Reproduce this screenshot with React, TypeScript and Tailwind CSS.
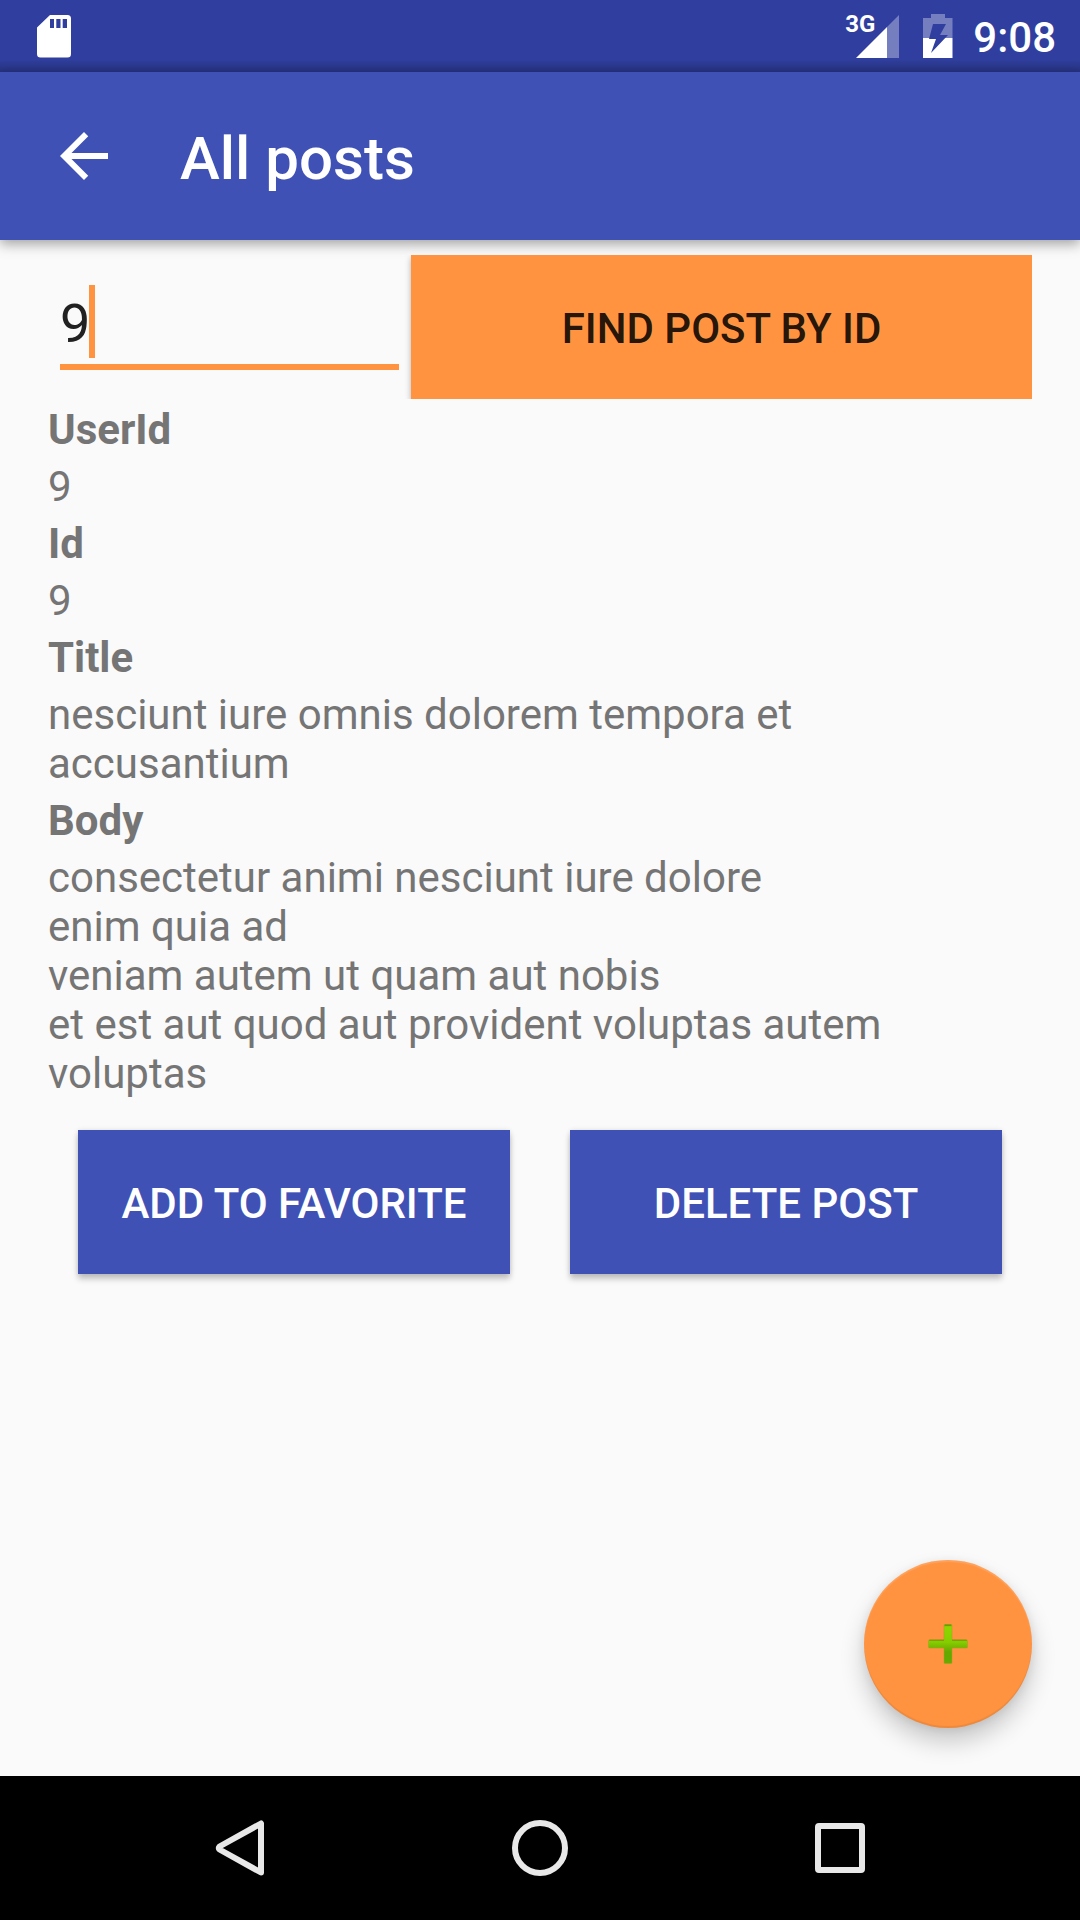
import React, { useState } from "react";

const actionButton =
  "flex h-36 flex-1 items-center justify-center bg-[#3f51b5] pt-0.5 text-[42px] font-medium text-white shadow-[0_5px_6px_rgba(0,0,0,0.22),0_0_5px_rgba(0,0,0,0.1)]";

const fields = [
  { label: "UserId", text: "9" },
  { label: "Id", text: "9" },
  { label: "Title", text: "nesciunt iure omnis dolorem tempora et accusantium" },
  {
    label: "Body",
    text: "consectetur animi nesciunt iure dolore\nenim quia ad\nveniam autem ut quam aut nobis\net est aut quod aut provident voluptas autem voluptas",
  },
];

function StatusBar() {
  return (
    <div className="flex h-[72px] items-center justify-between bg-[#303f9f] bg-linear-to-b from-transparent from-82% to-black/20 pr-6 pl-9">
      <svg width="36" height="44" viewBox="0 0 36 44" aria-label="SD card">
        <path
          fill="#fff"
          fillRule="evenodd"
          d="M14 1h17.500a3.500 3.500 0 0 1 3.500 3.500v35.500a3.500 3.500 0 0 1-3.500 3.500h-27a3.500 3.500 0 0 1-3.500-3.500V13.500ZM14 5v9h4V5Zm6.300 0v9h4.200V5Zm6.400 0v9H31V5Z"
        />
      </svg>
      <div className="flex items-center">
        <div className="relative h-11 w-[54px]">
          <span className="absolute -top-1 left-0 text-[24px] leading-[28px] font-bold text-white">3G</span>
          <svg className="absolute right-0 bottom-0" width="43" height="43" viewBox="0 0 43 43" aria-label="Signal">
            <path fill="#757fc0" d="M43 0v43H31V12Z" />
            <path fill="#fff" d="M31 12v31H0Z" />
          </svg>
        </div>
        <svg className="ml-6" width="30" height="44" viewBox="0 0 30 44" aria-label="Battery charging">
          <path fill="#757fc0" d="M8 0h14v4h7.500v20H0V4h8Z" />
          <path fill="#fff" d="M0 24h29.500v20H0Z" />
          <path fill="#303f9f" d="M10 10h13l-6 11h8L8 39l5-14H6Z" />
        </svg>
        <span className="ml-5 pt-0.5 text-[42px] leading-[49px] font-medium text-white">9:08</span>
      </div>
    </div>
  );
}

function AppBar() {
  return (
    <header className="relative flex h-[168px] items-center bg-[#3f51b5] pl-12 shadow-[0_4px_12px_rgba(0,0,0,0.36)]">
      <button type="button" aria-label="Back">
        <svg width="72" height="72" viewBox="0 0 24 24" fill="#fff">
          <path d="M20 11H7.830l5.590-5.590L12 4l-8 8 8 8 1.410-1.410L7.830 13H20v-2z" />
        </svg>
      </button>
      <h1 className="ml-[60px] pt-1.5 text-[60px] leading-[70px] font-medium text-white">All posts</h1>
    </header>
  );
}

function NavBar() {
  return (
    <nav className="flex h-36 items-center bg-black px-[90px]">
      <button type="button" aria-label="Back" className="flex flex-1 justify-center">
        <svg width="60" height="60" viewBox="0 0 60 60" fill="none" stroke="#e8e8e8" strokeWidth="6" strokeLinejoin="round">
          <path d="M51 5.500v49L9.500 31.500q-1.500-1.500 0-3Z" />
        </svg>
      </button>
      <button type="button" aria-label="Home" className="flex flex-1 justify-center">
        <svg width="60" height="60" viewBox="0 0 60 60" fill="none" stroke="#e8e8e8" strokeWidth="6">
          <circle cx="30" cy="30" r="25" />
        </svg>
      </button>
      <button type="button" aria-label="Overview" className="flex flex-1 justify-center">
        <svg width="60" height="60" viewBox="0 0 60 60" fill="none" stroke="#e8e8e8" strokeWidth="6">
          <rect x="8" y="8" width="44" height="44" rx="1" />
        </svg>
      </button>
    </nav>
  );
}

export default function App() {
  const [postId, setPostId] = useState("9");

  return (
    <div className="flex min-h-screen flex-col bg-[#fafafa] font-['Roboto',sans-serif]">
      <StatusBar />
      <AppBar />
      <main className="relative flex-1 px-12 pt-[15px]">
        <form
          className="grid grid-cols-[363fr_621fr] overflow-hidden"
          onSubmit={(e) => e.preventDefault()}
        >
          <div className="relative mx-3 mt-[30px] mb-[29px] border-b-[6px] border-[#ff9340]">
            <input
              aria-label="Post id"
              value={postId}
              onChange={(e) => setPostId(e.target.value)}
              className="block h-[73px] w-full bg-transparent pt-1 text-[54px] leading-[69px] text-[#212121] caret-transparent outline-none"
            />
            <span className="absolute top-0 left-[29px] h-[73px] w-1.5 bg-[#ff9340]" />
          </div>
          <button
            type="submit"
            className="flex h-36 items-center justify-center bg-[#ff9340] pt-0.5 text-[42px] font-medium text-black/87 shadow-[0_3px_6px_rgba(0,0,0,0.3)]"
          >
            FIND POST BY ID
          </button>
        </form>

        <dl className="text-[42px] leading-[49px] text-[#757575]">
          {fields.map((f) => (
            <React.Fragment key={f.label}>
              <dt className="pt-1.5 pb-0.5 font-bold">{f.label}</dt>
              <dd className="pt-1.5 pb-0.5 whitespace-pre-line">{f.text}</dd>
            </React.Fragment>
          ))}
        </dl>

        <div className="mt-[30px] flex gap-[60px] px-[30px]">
          <button type="button" className={actionButton}>ADD TO FAVORITE</button>
          <button type="button" className={actionButton}>DELETE POST</button>
        </div>

        <button
          type="button"
          aria-label="Add post"
          className="absolute right-12 bottom-12 flex size-[168px] items-center justify-center rounded-full bg-[#ff9340] shadow-[0_14px_24px_rgba(0,0,0,0.2),0_2px_10px_rgba(0,0,0,0.08),inset_0_-2px_1px_rgba(0,0,0,0.07),inset_0_2px_1px_rgba(255,255,255,0.14)]"
        >
          <svg width="42" height="42" viewBox="0 0 42 42">
            <defs>
              <linearGradient id="plus" x1="0" y1="0" x2="0" y2="1">
                <stop offset="0" stopColor="#5f9a00" />
                <stop offset="0.06" stopColor="#8fd600" />
                <stop offset="0.45" stopColor="#86cd00" />
                <stop offset="0.7" stopColor="#66a800" />
                <stop offset="1" stopColor="#64ab00" />
              </linearGradient>
            </defs>
            <path
              fill="url(#plus)"
              stroke="#a8a020"
              strokeOpacity="0.5"
              d="M18 1.500h6q1 0 1 1V17h14.500q1 0 1 1v6q0 1-1 1H25v14.500q0 1-1 1h-6q-1 0-1-1V25H2.500q-1 0-1-1v-6q0-1 1-1H17V2.500q0-1 1-1Z"
            />
            <path fill="#5b8a00" fillOpacity="0.5" d="M2.500 16.500H17V18H2ZM25 16.500h14.500l.5 1.500H25ZM18 1.500h6V3h-6Z" />
          </svg>
        </button>
      </main>
      <NavBar />
    </div>
  );
}
